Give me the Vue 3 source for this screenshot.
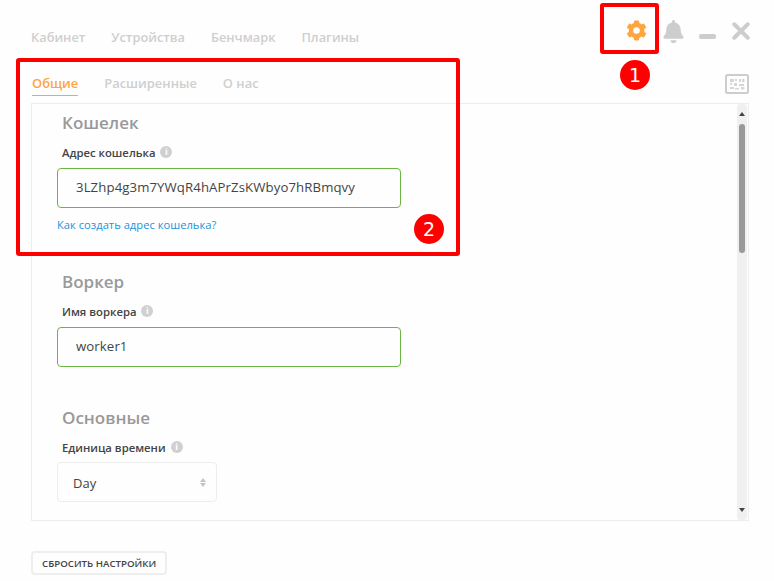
<script setup>
const navItems = ['Кабинет', 'Устройства', 'Бенчмарк', 'Плагины']
const tabs = ['Общие', 'Расширенные', 'О нас']
</script>

<template>
  <div class="app">
    <header class="top">
      <nav class="nav">
        <a v-for="item in navItems" :key="item" class="nav-item">{{ item }}</a>
      </nav>
      <div class="controls">
        <svg class="ic gear" viewBox="0 0 512 512" width="21" height="21">
          <path fill="#ffa53f" d="M487 316l-42-25a190 190 0 0 0 0-70l42-25c5-3 7-8 5-14-11-35-30-67-54-93-4-4-9-5-14-2l-42 24a187 187 0 0 0-61-35V28c0-6-4-10-9-11-36-8-73-8-107 0-6 1-10 5-10 11v48a193 193 0 0 0-60 35L92 87c-5-3-11-2-14 2-25 26-43 58-54 93-2 6 0 11 5 14l42 25a190 190 0 0 0 0 70l-42 25c-5 3-7 8-5 14 11 35 30 67 54 93 4 4 9 5 14 2l42-24a187 187 0 0 0 60 35v48c0 6 4 10 10 11 36 8 73 8 107 0 5-1 9-5 9-11v-48a193 193 0 0 0 61-35l42 24c5 3 10 2 14-2 25-26 43-58 54-93 2-6 0-11-5-14zM256 336a80 80 0 1 1 0-160 80 80 0 0 1 0 160z" />
        </svg>
        <svg class="ic bell" viewBox="0 0 448 512" width="21" height="23">
          <path fill="#cdcdcd" d="M224 512a64 64 0 0 0 64-64H160a64 64 0 0 0 64 64zm215-150c-19-21-55-52-55-154 0-78-54-140-128-155V32a32 32 0 0 0-64 0v21C118 68 64 130 64 208c0 102-36 133-55 154-6 6-9 14-9 22 0 16 13 32 32 32h384c19 0 32-16 32-32 0-8-3-16-9-22z" />
        </svg>
        <span class="minimize"></span>
        <svg class="ic close" viewBox="0 0 20 20" width="18" height="18">
          <path d="M2.5 2.5l15 15M17.5 2.5l-15 15" stroke="#cdcdcd" stroke-width="4.4" stroke-linecap="round" fill="none" />
        </svg>
      </div>
    </header>

    <div class="tabs-row">
      <div class="tabs">
        <a v-for="(tab, i) in tabs" :key="tab" class="tab" :class="{ active: i === 0 }">{{ tab }}</a>
      </div>
      <svg class="keypad" viewBox="0 0 24 20" width="24" height="20">
        <rect x="1" y="1" width="22" height="18" rx="1.5" fill="none" stroke="#cdcdcd" stroke-width="2" />
        <path d="M5 5h4v3H5zM10 5h2v2h-2zM14 5h2v3h-2zM17 5h2.500v3H17zM5 9h2v2H5zM9 9h3v3H9zM14 10h5v2h-5zM5 13h4v2H5zM10 14h4v1.500h-4zM16 13h3.500v2.500H16z" fill="#d6d6d6" />
      </svg>
    </div>

    <main class="panel">
      <div class="content">
        <section class="group">
          <h2>Кошелек</h2>
          <label class="label">Адрес кошелька <i class="info">i</i></label>
          <div class="input valid">3LZhp4g3m7YWqR4hAPrZsKWbyo7hRBmqvy</div>
          <a class="help">Как создать адрес кошелька?</a>
        </section>
        <section class="group worker">
          <h2>Воркер</h2>
          <label class="label">Имя воркера <i class="info">i</i></label>
          <div class="input valid">worker1</div>
        </section>
        <section class="group basic">
          <h2>Основные</h2>
          <label class="label">Единица времени <i class="info">i</i></label>
          <div class="select">
            Day
            <span class="arrows"><b class="up"></b><b class="down"></b></span>
          </div>
        </section>
      </div>
      <div class="scrollbar">
        <b class="sb-up"></b>
        <div class="thumb"></div>
        <b class="sb-down"></b>
      </div>
    </main>

    <button class="reset">СБРОСИТЬ НАСТРОЙКИ</button>

    <div class="mark box-one"></div>
    <div class="badge badge-one">1</div>
    <div class="mark box-two"></div>
    <div class="badge badge-two">2</div>
  </div>
</template>

<style>
body {
  margin: 0;
  background: #fefefe;
}
</style>

<style scoped>
.app {
  position: relative;
  width: 774px;
  height: 581px;
  overflow: hidden;
  box-sizing: border-box;
  padding: 0 25px 0 31px;
  background: #fefefe;
  font-family: "Open Sans", "Noto Sans", sans-serif;
  color: #333;
}

.top {
  display: flex;
  align-items: center;
  justify-content: space-between;
  height: 62px;
}

.nav {
  display: flex;
  gap: 26px;
  margin-top: 12px;
}

.nav-item {
  font-size: 12.8px;
  font-weight: 600;
  color: #cfcfcf;
}

.controls {
  display: flex;
  align-items: center;
  margin-right: -1px;
}

.gear {
  margin-top: -2px;
  margin-right: 16px;
}

.bell {
  margin-right: 15px;
}

.minimize {
  width: 17px;
  height: 5px;
  margin-top: 10px;
  margin-right: 16px;
  border-radius: 2px;
  background: #cdcdcd;
}

.tabs-row {
  display: flex;
  align-items: flex-start;
  justify-content: space-between;
  height: 41px;
}

.tabs {
  display: flex;
  gap: 26px;
  margin-top: 12px;
  margin-left: 1px;
}

.tab {
  height: 21px;
  font-size: 12.9px;
  line-height: 18px;
  font-weight: 600;
  color: #cfcfcf;
}

.tab.active {
  color: #ffa53f;
  border-bottom: 1px solid #ffa53f;
}

.keypad {
  margin-top: 12px;
}

.panel {
  display: flex;
  box-sizing: border-box;
  height: 418px;
  border: 1px solid #ededed;
  overflow: hidden;
}

.content {
  flex: 1;
  padding: 6px 0 0 25px;
}

.group {
  width: 344px;
}

h2 {
  margin: 0;
  padding-left: 5px;
  font-size: 17px;
  line-height: 25px;
  font-weight: 600;
  color: #999;
}

.label {
  display: block;
  margin-top: 9px;
  padding-left: 5px;
  font-size: 11.3px;
  line-height: 17px;
  font-weight: 600;
  color: #444;
}

.info {
  display: inline-block;
  width: 12px;
  height: 12px;
  margin-left: 2px;
  border-radius: 50%;
  background: #d0d0d0;
  color: #fff;
  font-size: 9px;
  line-height: 12px;
  font-style: normal;
  font-weight: 700;
  text-align: center;
  vertical-align: 2px;
}

.input {
  box-sizing: border-box;
  height: 40px;
  margin-top: 7px;
  padding-left: 18px;
  border-radius: 4px;
  font-size: 13.2px;
  line-height: 36px;
  letter-spacing: 0.1px;
  color: #444;
}

.valid {
  border: 1px solid #6bb643;
}

.help {
  display: block;
  margin-top: 9px;
  font-size: 11.2px;
  line-height: 16px;
  color: #1a95dc;
}

.worker {
  margin-top: 36px;
}

.basic {
  margin-top: 38px;
}

.select {
  position: relative;
  box-sizing: border-box;
  width: 160px;
  height: 40px;
  margin-top: 6px;
  padding-left: 15px;
  border: 1px solid #ededed;
  border-radius: 4px;
  font-size: 13px;
  line-height: 40px;
  color: #444;
}

.arrows {
  position: absolute;
  top: 15px;
  right: 10px;
  display: flex;
  flex-direction: column;
  gap: 1px;
}

.arrows b {
  width: 0;
  height: 0;
  border-left: 3.5px solid transparent;
  border-right: 3.5px solid transparent;
}

.up {
  border-bottom: 4px solid #c4c4c4;
}

.down {
  border-top: 4px solid #c4c4c4;
}

.scrollbar {
  position: relative;
  flex: none;
  width: 10px;
  margin-right: 1px;
  border-radius: 3px;
  background: #f0f0f0;
}

.thumb {
  position: absolute;
  top: 20px;
  left: 2px;
  width: 6px;
  height: 129px;
  border-radius: 3px;
  background: #999;
}

.sb-up,
.sb-down {
  position: absolute;
  left: 2px;
  width: 0;
  height: 0;
  border-left: 3px solid transparent;
  border-right: 3px solid transparent;
}

.sb-up {
  top: 8px;
  border-bottom: 4px solid #444;
}

.sb-down {
  bottom: 8px;
  border-top: 4px solid #444;
}

.reset {
  display: block;
  height: 24px;
  margin-top: 30px;
  padding: 0 9px;
  border: 2px solid #eee;
  border-radius: 4px;
  background: #fefefe;
  font-family: inherit;
  font-size: 9.7px;
  font-weight: 600;
  color: #444;
}

.mark {
  position: absolute;
  box-sizing: border-box;
  border: 4px solid #ff0000;
  border-radius: 3px;
}

.box-one {
  left: 600px;
  top: 3px;
  width: 59px;
  height: 51px;
}

.box-two {
  left: 16px;
  top: 58px;
  width: 444px;
  height: 198px;
}

.badge {
  position: absolute;
  width: 30px;
  height: 30px;
  border-radius: 50%;
  background: #ff0000;
  color: #fff;
  font-family: "DejaVu Sans", sans-serif;
  font-size: 19px;
  line-height: 30px;
  text-align: center;
}

.badge-one {
  left: 620px;
  top: 60px;
}

.badge-two {
  left: 414px;
  top: 214px;
}
</style>
